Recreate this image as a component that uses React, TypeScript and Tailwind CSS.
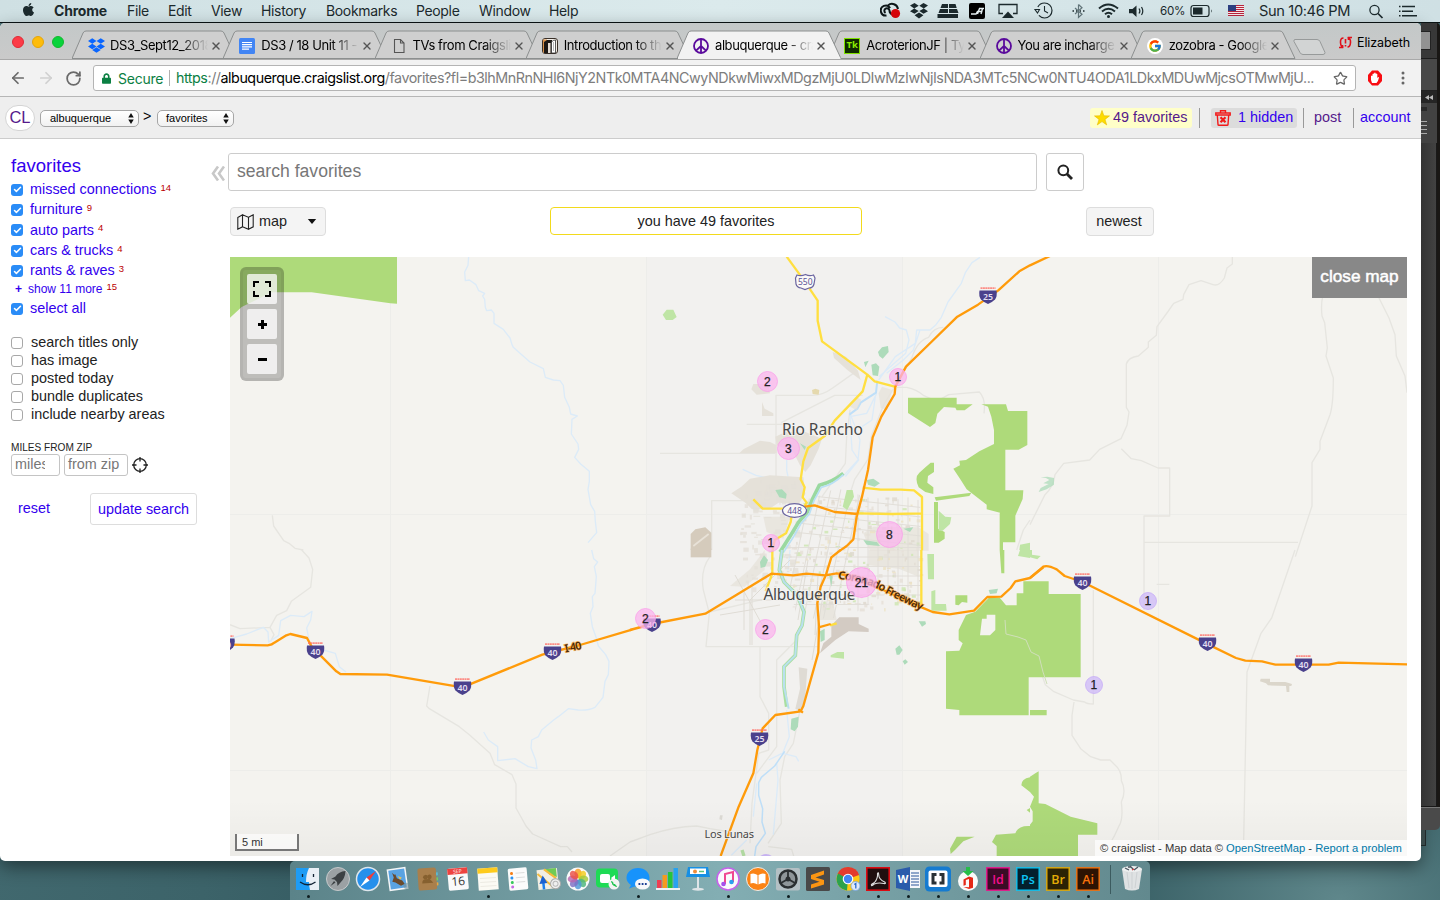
import React from "react";
import { FaApple, FaDropbox, FaLock } from "react-icons/fa";
import { FcGoogle } from "react-icons/fc";
import { X, ArrowLeft, ArrowRight, RotateCw, Star, Search, Check } from "lucide-react";

const ARIAL = "font-['Liberation_Sans',Arial,sans-serif]";
const UI = "font-['Inter',sans-serif]";

/* ---------- menu bar ---------- */

const menus: [string, string][] = [
  ["Chrome", "w-[73px] font-bold tracking-[-0.2px]"],
  ["File", "w-[41px]"],
  ["Edit", "w-[43px]"],
  ["View", "w-[50px]"],
  ["History", "w-[65px]"],
  ["Bookmarks", "w-[90px]"],
  ["People", "w-[63px]"],
  ["Window", "w-[70px]"],
  ["Help", "w-[40px]"],
];

function MenuBar() {
  return (
    <header className="flex h-[23px] shrink-0 items-center border-b border-[#0b1415] bg-linear-to-r from-[#cfe0e3] via-[#dbeaec] to-[#cfe0e4] pb-px pl-[21px] text-[14px] tracking-[-0.35px] text-[#1c2a2d]">
      <FaApple className="mr-[18px] -mt-0.5 size-[15px]" />
      {menus.map(([m, c]) => (
        <span key={m} className={c}>{m}</span>
      ))}
      <svg className="ml-[291px] h-[22px] w-[545px]" viewBox="880 0 545 22" fill="none" stroke="#1c2a2d">
        <path d="M886.500 15.500a5 5 0 1 1 3.600-7.500M885.500 13a2.600 2.600 0 1 1 4-2.500q0 3 3 4M888 5.500a6 6 0 0 1 10 3.500" strokeWidth="2" stroke="#0d1719" />
        <circle cx="895.500" cy="13.500" r="4.600" fill="#d9060b" stroke="none" />
        <path d="M910 5.500l4.500-2.500 4.200 2.800-4.500 2.700zM928 5.500l-4.500-2.500-4.200 2.800 4.500 2.700zM910 11.200l4.500 2.600 4.200-2.700-4.500-2.600zM928 11.200l-4.500 2.600-4.200-2.700 4.500-2.600zM914.600 15.200l4.400-2.800 4.400 2.800-4.400 3.300z" fill="#1c2a2d" stroke="none" />
        <path d="M942 4h6v4h-7.500zM949 4h6.500l1.200 4H949zM940 9h8v4h-9.500zM949 9h8l1.500 4H949zM937.500 14h20.500v4h-20.500z" fill="#1c2a2d" stroke="none" />
        <rect x="969" y="3" width="16" height="16" rx="2" fill="#000" stroke="none" />
        <path d="M971 14h5l1.500-2.500h5M979 8.500h5M977.500 14l2-5.500M981 14l1.500-5.500" stroke="#e8f2f4" strokeWidth="1.400" />
        <path d="M1003 13.500h-4v-9h18v9h-4" strokeWidth="1.300" />
        <path d="M1008 11.500l6 6.500h-12z" fill="#1c2a2d" stroke="none" />
        <path d="M1078.500 4.500v13l3.500-3.200-7-6.300M1078.500 4.500l3.500 3.200-7 6.300" stroke="#62757a" strokeWidth="1.200" />
        <path d="M1072.500 11h1.500M1083 11h1.500M1076 11h1M1080 11h1" strokeWidth="1.600" />
        <path d="M1099 8.500q9-8 19 0M1102 11.500q6.500-5.500 13 0M1105 14.300q3.500-3 7 0" strokeWidth="2" />
        <circle cx="1108.500" cy="16.500" r="1.500" fill="#1c2a2d" stroke="none" />
        <path d="M1129 9h3.500l4-3.500v11.500l-4-3.700h-3.500z" fill="#1c2a2d" stroke="none" />
        <path d="M1139 8.500q1.800 2.500 0 5M1141.500 7q2.600 4.200 0 8" strokeWidth="1.200" />
        <rect x="1191" y="5.500" width="18" height="11" rx="2.500" strokeWidth="1.200" />
        <rect x="1193" y="7.500" width="9.500" height="7" fill="#1c2a2d" stroke="none" />
        <path d="M1211.300 9.200q1.500 1.800 0 3.600z" fill="#1c2a2d" stroke="none" />
        <rect x="1228" y="5" width="16" height="11" fill="#f4e8ea" stroke="none" />
        <path d="M1228 5.500h16M1228 7.500h16M1228 9.500h16M1228 11.500h16M1228 13.500h16M1228 15.500h16" stroke="#b8243c" strokeWidth="1" />
        <rect x="1228" y="5" width="8" height="6" fill="#2c3f80" stroke="none" />
        <circle cx="1374.500" cy="10" r="4.600" strokeWidth="1.300" />
        <path d="M1378 13.500l4.500 4.500" strokeWidth="1.700" />
        <path d="M1399 6.500h1.500M1399 11.200h1.500M1399 15.800h1.500" strokeWidth="1.600" />
        <path d="M1402 6.500h13M1402 11.200h11M1402 15.800h15" strokeWidth="1.600" />
        <circle cx="1044.500" cy="10.500" r="7.500" strokeWidth="1.200" strokeDasharray="38 9" strokeDashoffset="-27" />
        <path d="M1035 9.500h4.500l-2 3.500zM1044.500 6v5l3.500 2" strokeWidth="1.100" />
        <text x="1160" y="15.300" fontSize="12.200" fill="#1c2a2d" stroke="none" textLength="25" lengthAdjust="spacingAndGlyphs">60%</text>
        <text x="1259" y="16" fontSize="14" fill="#1c2a2d" stroke="none" textLength="91" lengthAdjust="spacingAndGlyphs">Sun 10:46 PM</text>
      </svg>
    </header>
  );
}

/* ---------- tab strip ---------- */

const Peace = ({ className = "size-4" }: { className?: string }) => (
  <svg viewBox="0 0 16 16" className={className} fill="none" stroke="#5a0a9c" strokeWidth="1.800">
    <circle cx="8" cy="8" r="7" />
    <path d="M8 1v14M8 8l-5 4.700M8 8l5 4.700" />
  </svg>
);

const DocIcon = () => (
  <svg viewBox="0 0 16 16" className="size-4">
    <rect width="16" height="16" rx="1.500" fill="#4285f4" />
    <path d="M3 4.500h10M3 6.700h10M3 8.900h10M3 11.100h7" stroke="#fff" strokeWidth="1.200" />
  </svg>
);
const PageIcon = () => (
  <svg viewBox="0 0 16 16" className="size-4" fill="none" stroke="#555" strokeWidth="1.100">
    <path d="M3.500 1.500h6l3.500 3.500v9.500h-9.500zM9.500 1.500v3.500h3.500" />
  </svg>
);
const BookIcon = () => (
  <svg viewBox="0 0 16 16" className="size-4">
    <rect x=".5" y=".5" width="15" height="15" rx="2.500" fill="#f4efe9" stroke="#3a3029" />
    <path d="M1 1.500h4v13H1z" fill="#d9924a" />
    <path d="M2 15V4l3-2h5v13z" fill="#1c1815" />
    <rect x="6" y="5" width="2.500" height="10" fill="#e5dcd2" />
    <path d="M9.500 4q1.500-2 4-2v13h-4z" fill="#fff" stroke="#333" strokeWidth=".8" />
    <path d="M11.500 4v9" stroke="#999" strokeWidth=".7" />
  </svg>
);
const TkIcon = () => (
  <span className="flex size-4 items-center justify-center border border-[#7fe000] bg-[#102a00] font-['Open_Sans'] text-[9.500px] font-bold text-[#8cf000]">Tk</span>
);

const tabs: { t: string; icon: React.ReactNode; active?: boolean }[] = [
  { t: "DS3_Sept12_2018", icon: <FaDropbox className="size-[17px] text-[#0a66ff]" /> },
  { t: "DS3 / 18 Unit 11 - G", icon: <DocIcon /> },
  { t: "TVs from Craigslist", icon: <PageIcon /> },
  { t: "Introduction to the", icon: <BookIcon /> },
  { t: "albuquerque - craigs", icon: <Peace />, active: true },
  { t: "AcroterionJF | Type", icon: <TkIcon /> },
  { t: "You are incharge o", icon: <Peace /> },
  { t: "zozobra - Google S", icon: <FcGoogle className="size-4 rounded-full bg-white p-px" /> },
];

function TabStrip() {
  return (
    <div className="flex h-[36px] items-end bg-linear-to-b from-[#c3c8c8] to-[#cacaca] pl-[12px]">
      <div className="flex h-[36px] w-[60px] shrink-0 items-center gap-2 pt-0.5">
        <i className="size-3 rounded-full border border-[#e02a35] bg-[#fc3b47]" />
        <i className="size-3 rounded-full border border-[#e5a50a] bg-[#fdbc0b]" />
        <i className="size-3 rounded-full border border-[#12b92e] bg-[#08d33b]" />
      </div>
      {tabs.map((tab, i) => (
        <div key={i} className={`relative flex h-[29px] w-[151.250px] shrink-0 items-center pt-0.5 pl-[16px] ${tab.active ? "z-10" : ""}`}>
          <svg className="absolute left-0 top-0 h-[29px] w-[165px]" viewBox="0 0 165 29">
            <path d="M0 28.500L11 3Q12 1 14 1H149Q151 1 152 3L164 28.500Z" fill={tab.active ? "#f2f2f2" : "#cfcfcf"} stroke="#8c8f8f" />
            {tab.active && <path d="M1 28.500H163.500" stroke="#f2f2f2" strokeWidth="2" />}
          </svg>
          <span className="relative flex w-[22px] shrink-0 items-center">{tab.icon}</span>
          <span className="relative w-[98px] shrink-0 overflow-hidden whitespace-nowrap text-[13px] tracking-[-0.42px] text-black [mask-image:linear-gradient(to_right,black_72%,transparent)]">{tab.t}</span>
          <X className="relative ml-[2px] size-3 shrink-0 text-[#555]" strokeWidth={2.800} />
        </div>
      ))}
      <svg className="h-[36px] w-[55px] shrink-0" viewBox="0 0 55 36">
        <path d="M13 16.500h22q2 0 3 2l5 11q0 2-2 2H21q-2 0-3-2l-6-11q-.5-2 1-2z" fill="#d2d4d4" stroke="#979a9a" />
      </svg>
      <div className="flex h-[36px] w-[82px] shrink-0 items-center pt-[5px] pl-0.5 text-[12.500px] tracking-[-0.1px] text-black">
        <svg className="mr-[5px] mb-0.5 h-[13px] w-[13px]" viewBox="0 0 13 13" fill="none" stroke="#e0101a" strokeWidth="1.600">
          <path d="M4.500 2Q1.200 2 1.500 6.500T4.500 11M0 11.500h3.500V9M8.500 2q3.300 0 3 4.500T8.500 11M13 1.500H9.500V4M6.500 3v4.500M6.500 9v1.500" />
        </svg>
        <span>Elizabeth</span>
      </div>
    </div>
  );
}

function Toolbar() {
  return (
    <div className="flex h-[38px] items-center border-t border-b border-t-[#a9a9a9] border-b-[#b6b6b6] bg-[#f2f2f2] pl-[9px] text-[#6a6a6a]">
      <ArrowLeft className="size-[18px]" strokeWidth={2.300} />
      <ArrowRight className="ml-[10px] size-[18px] text-[#d0d0d0]" strokeWidth={2.300} />
      <RotateCw className="ml-[10px] size-[17px]" strokeWidth={2.500} />
      <div className="ml-[11px] flex h-[26px] w-[1263px] items-center rounded-[3px] border border-[#b4b4b4] bg-white pl-[8px] text-[14.300px] whitespace-nowrap">
        <FaLock className="h-[11px] w-[9px] text-[#0b8043]" />
        <span className="ml-[7px] w-[45px] text-[14px] tracking-[-0.25px] text-[#0b8043]">Secure</span>
        <span className="ml-[6px] h-4 w-px bg-[#b0b0b0]" />
        <span className="ml-[6px] w-[1157px] shrink-0 tracking-[-0.460px] text-[#7d7d7d]">
          <span className="text-[#0b8043]">https</span>://<span className="text-black">albuquerque.craigslist.org</span>/favorites?fl=b3lhMnRnNHI6NjY2NTk0MTA4NCwyNDkwMiwxMDgzMjU0LDIwMzIwNjIsNDA3MTc5NCw0NTU4ODA1LDkxMDUwMjcsOTMwMjU...
        </span>
        <Star className="size-[15px] shrink-0 text-[#666]" />
      </div>
      <svg className="ml-[11px] h-4 w-4" viewBox="0 0 16 16">
        <path d="M5 .5h6l4 4.500v6l-4 4.500H5L1 11V5z" fill="#f80c12" />
        <path d="M5 13Q3.500 10 4 6q1-1 1.500 0V4q1-1 1.600 0V3q1-1 1.600 0v1q1-1 1.600 0v4l1-1q1 0 .5 1.200Q11 12 9.500 13z" fill="#fff" />
      </svg>
      <svg className="ml-[12px] h-4 w-4" viewBox="0 0 16 16" fill="#666">
        <circle cx="8" cy="3" r="1.500" /><circle cx="8" cy="8" r="1.500" /><circle cx="8" cy="13" r="1.500" />
      </svg>
    </div>
  );
}

/* ---------- craigslist page ---------- */

const Spin = () => (
  <svg viewBox="0 0 6 12" className="h-[11px] w-[6px]"><path d="M3 0l3 5H0zM3 12l3-5H0z" fill="#111" /></svg>
);

function SiteHeader() {
  return (
    <div className="flex h-[42px] items-center border-b border-[#ccc] bg-[#eee] pl-[5px] text-[14.400px]">
      <span className="mr-[5px] flex h-[26px] w-[30px] items-center justify-center rounded-full border border-[#d4d4d4] bg-white text-[16.500px] text-[#551a8b]">CL</span>
      <span className="mt-px flex h-[17px] w-[99px] items-center justify-between rounded-[5px] border border-[#a6a6a6] bg-linear-to-b from-white to-[#f1f1f1] pr-[4px] pl-[9px] text-[11px] text-black">albuquerque<Spin /></span>
      <span className="w-[18px] pb-0.5 pl-[4px] text-black">&gt;</span>
      <span className="mt-px flex h-[17px] w-[77px] items-center justify-between rounded-[5px] border border-[#a6a6a6] bg-linear-to-b from-white to-[#f1f1f1] pr-[4px] pl-[8px] text-[11px] text-black">favorites<Spin /></span>
      <span className="ml-[856px] flex h-5 w-[102px] items-center rounded-[3px] bg-[#ffffc8] pl-[4px] whitespace-nowrap text-[#551a8b]">
        <svg viewBox="0 0 16 16" className="mr-[3px] size-4"><path d="M8 .5l1.900 5.300 5.600.1-4.500 3.500 1.700 5.500L8 11.600l-4.700 3.300L5 9.400.5 5.900l5.600-.1z" fill="#fddc00" stroke="#e8b800" strokeWidth=".6" /></svg>
        49 favorites
      </span>
      <span className="ml-[7px] h-5 w-px bg-[#999]" />
      <span className="ml-[11px] flex h-5 w-[86px] items-center rounded-[3px] bg-[#dcdcdc] pl-[4px] whitespace-nowrap text-[#3300ee]">
        <svg viewBox="0 0 16 16" className="mr-[7px] size-4" fill="none" stroke="#f21a1a" strokeWidth="1.400">
          <path d="M5.500 2.500v-1.800h5v1.800M.8 3h14.400v2H.8zM2.300 5l.7 9.500q0 .8 1 .8h8q1 0 1-.8L13.700 5" /><path d="M5.500 7.300l5 5M10.500 7.300l-5 5" strokeWidth="2.200" />
        </svg>
        1 hidden
      </span>
      <span className="ml-[6px] h-5 w-px bg-[#999]" />
      <span className="ml-[10px] w-[39px] text-[#551a8b]">post</span>
      <span className="h-5 w-px bg-[#999]" />
      <span className="ml-[6px] text-[#3300ee]">account</span>
    </div>
  );
}

const cats: [string, number][] = [
  ["missed connections", 14], ["furniture", 9], ["auto parts", 4], ["cars & trucks", 4], ["rants & raves", 3],
];
const opts = ["search titles only", "has image", "posted today", "bundle duplicates", "include nearby areas"];

const Checked = () => (
  <span className="mr-[7px] flex size-3 items-center justify-center rounded-[3px] bg-[#2a8cf7]">
    <Check className="size-[9px] text-white" strokeWidth={4} />
  </span>
);

function Sidebar() {
  return (
    <aside className="w-[211px] shrink-0 pt-[14px] pl-[11px] text-[14.400px] text-[#3300ee]">
      <div className="flex h-[26px] items-center text-[18.500px]">favorites</div>
      {cats.map(([c, n]) => (
        <div key={c} className="flex h-[20.300px] items-center pt-[1.500px]">
          <Checked />
          <span>{c}</span>
          <span className="ml-[4px] pb-[4px] text-[9.500px] text-[#b00]">{n}</span>
        </div>
      ))}
      <div className="flex h-[17px] items-center pl-[4px] text-[12px]">
        <b className="mr-[6px] text-[12px]">+</b>show 11 more<span className="ml-[4px] pb-[4px] text-[9.500px] text-[#b00]">15</span>
      </div>
      <div className="flex h-[21px] items-center pt-[1.500px]"><Checked />select all</div>
      <div className="mt-[14.500px] text-[#222]">
        {opts.map((o) => (
          <div key={o} className="flex h-[18px] items-center pt-[1.500px]">
            <span className="mr-[8px] size-3 rounded-[3px] border border-[#a8a8a8] bg-white" />
            {o}
          </div>
        ))}
      </div>
      <div className="mt-[17px] flex h-[14px] items-center text-[10.100px] text-[#222]"><span className="mt-0.5">MILES FROM ZIP</span></div>
      <div className="flex h-[22px] items-center text-[14.400px] text-[#777]">
        <span className="mr-[4px] flex h-[22px] w-[49px] items-center rounded-[3px] border border-[#c4c4c4] pl-[3px]"><span className="w-[30px] overflow-hidden">miles</span></span>
        <span className="mr-[4px] flex h-[22px] w-[64px] items-center rounded-[3px] border border-[#c4c4c4] pl-[3px] whitespace-nowrap">from zip</span>
        <svg viewBox="0 0 16 16" className="size-4" fill="none" stroke="#222" strokeWidth="1.300"><circle cx="8" cy="8" r="6.300" /><path d="M8 0v4.500M8 11.500V16M0 8h4.500M11.500 8H16" /></svg>
      </div>
      <div className="mt-[17px] flex h-[32px]">
        <span className="w-[79px] pt-[5px] pl-[7px]">reset</span>
        <span className="flex w-[107px] items-center justify-center rounded-[3px] border border-[#ddd] bg-white pt-0.5">update search</span>
      </div>
    </aside>
  );
}

/* ---------- map ---------- */

const Tile = ({ x, y, children }: { x: number; y: number; children: React.ReactNode }) => (
  <g transform={`translate(${x} ${y}) scale(.333333)`}>{children}</g>
);

function Shield({ x, y, n }: { x: number; y: number; n: string }) {
  return (
    <g transform={`translate(${x} ${y})`}>
      <path d="M-7.500-7.800h15" stroke="#ff6b63" strokeWidth="1.800" strokeDasharray="2 .4" opacity=".75" />
      <path d="M-8.500-5.500H8.500Q9.500 0 7 3.500 4 6.500 0 8-4 6.500-7 3.500-9.500 0-8.500-5.500Z" fill="#4a418c" />
      <text y="3.600" textAnchor="middle" fontFamily="Noto Sans" fontWeight="600" fontSize="8.800" fill="#e3dff0">{n}</text>
    </g>
  );
}

function Pin({ x, y, r, n, v }: { x: number; y: number; r: number; n: string; v?: boolean }) {
  return (
    <g>
      <circle cx={x} cy={y} r={r - 0.5} fill={v ? "#cdb8f8" : "#fbb4ee"} fillOpacity=".75" stroke={v ? "#c5abf7" : "#fa9eea"} strokeOpacity=".75" />
      <text x={x - 0.1} y={y + 4} textAnchor="middle" fontFamily="Liberation Sans" fontSize="12" fill="#222" stroke="#222" strokeWidth=".25">{n}</text>
    </g>
  );
}

/* short street segments and small blocks spread over the built-up area */
function seeded(seed: number) {
  let s = seed;
  return () => {
    s = (s * 16807) % 2147483647;
    return s / 2147483647;
  };
}
const rnd = seeded(77);
const blocks = Array.from({ length: 260 }, () => {
  const x = 792 + rnd() * 128;
  return { x, y: 497 + rnd() * 112, w: 1 + rnd() * 4, h: 1 + rnd() * 3, c: ["#e6e0d8", "#e6e0d8", "#dfd9cf", "#cfe6b4", "#ece2c4"][Math.floor(rnd() * 5)] };
});
const westBlocks = Array.from({ length: 110 }, () => ({ x: 740 + rnd() * 56, y: 480 + rnd() * 108, w: 1 + rnd() * 6, h: 1 + rnd() * 4 }));

function MapDrawing() {
  return (
    <svg className="absolute inset-0 h-[599px] w-[1177px]" viewBox="230 257 1177 599">
      <defs>
        <linearGradient id="fade" x1="0" y1="0" x2="0" y2="1"><stop offset="0" stopColor="#000" stopOpacity="0" /><stop offset="1" stopColor="#000" stopOpacity=".035" /></linearGradient>
        <clipPath id="city"><path d="M806 502l30-14 34 10 50 2 2 105-34-12-20 12-20 12-50 4-10-40-16-20 20-30z" /></clipPath>
      </defs>
      <rect x="230" y="257" width="1177" height="599" fill="#f4f3ef" />
      <rect x="646" y="257" width="257" height="599" fill="#f2f1ef" />
      <path d="M390.500 257v599M646.500 257v599M902.500 257v599M1158.500 257v599M230 514.500h1177M230 770.500h1177" stroke="#ededea" fill="none" />

      {/* faint county roads */}
      <g fill="none" stroke="#e6e5e0" strokeWidth="4" strokeLinejoin="round">
        <Tile x={230} y={250}><path d="M127 796l4 32 30 44 16 8 18 15 25 5" /></Tile>
        <Tile x={230} y={550}><path d="M215 0l22 24 11 34-6 54-58 42-14 28-30 14-20 36-90 4-30-12M120 232l12 22-10 20M600 408l-10 60 8 8 90 54 30 24 62 56 14 34 52 30 12 28v72l30 54 20 24 84 38 20 0 14 16M1200 876l-60 42" /></Tile>
        <Tile x={630} y={250}><path d="M438 680V436h110q30 0 60-22l62-44M350 523h122M90 610h345M454 518l160-82h84M800 412h30q30 6 50 24l40 18 36-20 92-8q20 20 14 64M940 232q-30 0-44 30-34 10-50 60l-34 60-50 80-38 96-10 70-40 60-26 80M660 480l-10 80-4 80-70 100M245 900V752h120M1160 900l20-60 20-30" /></Tile>
        <Tile x={630} y={550}><path d="M240 20q-30 40-20 100l18 70-10 100h340M238 186l170-40M390 290v150l26 50v110l-30 10-20 150-6 120M500 270l-60 60v260l-60 80M510 480l-20 100-26 40-14 70 4 130-40 60M0 876l60-22q70-24 140-26l40 8 60 10M415 890l70 8 6 20" /></Tile>
        <Tile x={1030} y={250}>
          <path d="M607 20v22l-16 12-8 30q-16 26-34 20l-36-12-36 12-16 30-2 14-28 12-18 26-32 44-2 26-24 20v16l-30 26q-30 4-36 24v130l8 14-6 40-18 40-64 32-30 32-78 10-26 34q-4 36-30 60L0 824M274 596l30 30 30 6 50 22h35v144h-77v102M342 877h462M970 28l-80 90q-20 20-14 80l8 20 8 76-4 24 22 66q0 80-10 110l-30 80v24l-24 40v130l-50 152M985 24l32 60 60 120 18 50 4 64 26 60 6 50" />
        </Tile>
        <Tile x={1030} y={550}><path d="M342 0v180M380 103h38M795 0l-70 204-32 46-42 116-10 504M190 120v342q-20 0-26-6l-34-6-60-26-24-20-14-40M132 456l-6 40v60l26 40 30 24 30 10h28l12 12q24 20 22 50 16 30 0 64 6 50-6 70l-14 30-8 14" /></Tile>
      </g>

      {/* rivers */}
      <g fill="none" stroke="#dcebf8" strokeWidth="4" strokeLinejoin="round">
        <Tile x={230} y={250}><path d="M716 20l-2 26-10 20 2 26 12-2 20 14 8 18 18 8-6 8 6 10 2 24 4 10 14-2 8 10v30l28 18 20 26 6 20 4 8 20 18 30 26 40 20 6 26 24 8 20 2 10 14 4 36 14 30 4 20 20 6-16 10-2 44 20 30 2 16-12 24 18 20 26 22v30l-4 24 8 46 12 20 2 30 4 34-26 30" /></Tile>
        <Tile x={230} y={550}><path d="M1085 0l6 26 12 10-10 14 6 30-4 50-8 10 2 30-8 20 6 40 12 34 6 24 22 26 10 20-2 40-10 20-6 48-24 30q-20 10-50 8l-30-4-30 24-14 10-36 30-10 20-20 10-2 24 14 36 4 26-26-6-40-24-52 6V590l-28-20-14-24M0 266l50-14 50-20 14 14 2 30 30-20 6-44 30-16 40 4 24-16-4 26-12 24 10 50 20 18M280 300l36 10 12 40 20 16" /></Tile>
        <Tile x={630} y={250}><path d="M1050 22l-24 16-20 30-12 32-40 56-20 46-16 22-18 16h-40l-4 40-60 40-50 70M765 200l30 16 14 18 20 6 8 30-10 40-80 70M870 240l-20 60-30 30-50 40M338 658l40 18 66 16 70 40M470 630v30l4 20M740 430l-30 60-50 10 6 100 20 30-40 50M660 490l30 80-6 60-46 50M736 440l-10 70-30 20" /></Tile>
        <Tile x={630} y={550}><path d="M470 480l8 80-20 50 40 10 8 14M440 640l4 50-14 164M380 700l-10 100M350 870l-46 46M456 610l-40 20M480 0l-6 60" /></Tile>
      </g>
      <g fill="none" stroke="#bfdff8" strokeWidth="4.500" strokeLinejoin="round">
        <Tile x={630} y={250}><path d="M742 392l-4 36-46 30-10 18-24 18" strokeWidth="6" /></Tile>
        <Tile x={630} y={550}><path d="M464 604l-30 44-40 34-8 16v38l12 40-2 40 10 34-28 40-4 28" /></Tile>
      </g>

      {/* built-up areas */}
      <g fill="#e5e1d9">
        <Tile x={630} y={250}>
          <path d="M608 306l40 14 36 42 8 28-40-30-40-36zM370 402h44l6 28-40 4-16-16zM396 456l8 20 26 14v8h-34zM340 598l50-26 30 4 20 10 0 24-112 0zM436 560l30-14 60 0 50 20-10 30-24 50-16 20-16-20-20-40-50-20zM304 730l30-20 26-24 60-10 100 6 6 50-20 30-60-4-30 20-50 0-20-20z" />
          <path d="M660 470l20-30 14 10-14 30zM746 430l10-20 30 10-14 60-20-6zM400 800l80 0-20 66-50-20z" opacity=".7" />
          <path d="M700 850l30-20 136 2 30 20v50H720z" opacity=".7" />
        </Tile>
        <Tile x={630} y={550}><path d="M716 0h150v80l-60-24-90-10zM300 108l60-50 44-58 0 60-60 50zM570 160l40 0 10 50-50 0z" opacity=".7" /></Tile>
      </g>
      {westBlocks.map((b, i) => <rect key={i} x={b.x} y={b.y} width={b.w} height={b.h} fill="#e4e0d8" opacity=".8" />)}
      {blocks.map((b, i) => <rect key={i} x={b.x} y={b.y} width={b.w} height={b.h} fill={b.c} opacity=".85" />)}
      <g clipPath="url(#city)" stroke="#e0ddd7" strokeWidth=".9" fill="none">
        {Array.from({ length: 13 }, (_, i) => <path key={i} d={`M${798 + i * 10} 480v140`} transform={i < 6 ? `rotate(12 ${798 + i * 10} 550)` : undefined} />)}
        {Array.from({ length: 12 }, (_, i) => <path key={i} d={`M780 ${500 + i * 9.500}h150`} transform={i < 5 ? `rotate(6 850 ${500 + i * 9.500})` : undefined} />)}
      </g>
      <g fill="none" stroke="#dfdcd5" strokeWidth="1">
        <path d="M735 575l30 55M744 590v40M752 585v60M720 615l60-10M790 560l-40 40v45M808 560l-10 60M818 575l-3 60M735 600h60M812 660l12-70" />
      </g>
      <Tile x={630} y={250}>
        <path d="M182 900V852l14-14 30-6 18 16v52z" fill="#d5cbbc" /><path d="M190 888l46-36" stroke="#e8e2d8" strokeWidth="5" />
        <path d="M546 420l10-4 12 4-2 14-18-2z" fill="#e5d9ae" />
      </Tile>
      <Tile x={630} y={550}>
        <path d="M182-4H244V22H182z" fill="#d5cbbc" />
        <path d="M604 226l24-24h58v20l30 14v10l-60-2-40 26-46 40 10-30 24-20z" fill="#d3cbc3" />
        <path d="M506 352l26 4-6 80-10 50-20-10 14-60z" fill="#dfdbd4" />
        <path d="M270 796h8l-2 14-8-2z" fill="#dcdad4" />
      </Tile>
      <Tile x={1030} y={550}><path d="M692 386h28v10h46l20 6-2 6h-6v18h-8l-2-18-54-2-6-6-18-6z" fill="#dbd6cb" /></Tile>

      {/* parks and forest */}
      <g fill="#aeda7a">
        <Tile x={230} y={250}><path d="M0 20h501v141l-20-1-236-33-120 0-90 44L0 203z" /></Tile>
        <Tile x={630} y={250}>
          <path d="M834 443h146v20h48l-24 18h-24l-4-8-34-2-20 20-6 28-16 12-66-42z" />
          <path d="M1054 463h74l6 20h58v102l-26 14h-40v122h54l-2 26-22 50v80h-46V788l-40-10v-14l-60-46-20-32-20-30 20-10-2-14 20-2 40-26 44-22V540l-8-40-10-30z" />
          <path d="M888 650l14-12h10v28l-18 12-2 20 18 14v20l-24-6-20-14q-14-30 2-44zM914 742l110-14-6 10-100 14zM912 756h12v80l20 10v20l-18 12h-14zM1109 790v110h10v-110z" />
        </Tile>
        <Tile x={630} y={550}>
          <path d="M948 304L988 302L998 280L986 270V240L1008 195L1036 185L1076 144H1110L1128 166H1160V130H1180V94H1256V132H1352V382H1196V496H988V480L948 476Z" />
          <path d="M1050 256l6-50h14v-12h26v46l-16 16z" fill="#f4f3ef" />
          <path d="M976 136h36v22l-16-2-10 10-10-2zM1109 0h14v70h-9z" />
          <path d="M960 896L980 860H1034L1000 874L975 900L962 912Z" />
          <path d="M1100 918V888L1086 876L1098 854L1156 850Q1164 826 1200 828V918zM1174 706q0-20 26-24v44zM1190 780l10-6v14z" />
        </Tile>
        <Tile x={1030} y={550}>
          <path d="M0 480h50v16H0zM0 680l16-10 10-6v96l20 2 76 38 80 20v34h-58v64H0v-94l8-10v-30l-8-14 12-30-12-14z" />
        </Tile>
      </g>
      <path d="M1005 620l1 14 12 3 8 3 5 12 8 4 4 16 4 12" fill="none" stroke="#d0dfba" />
      <g fill="#bfe5a5">
        <Tile x={630} y={250}><path d="M98 194l12-15h20l10 22-12 9h-20zM926 782l20 18 18 2-4 20-22 20h-12zM650 720h18l4 20-20 40-14-10zM1170 884l30-6v22h-32z" /></Tile>
        <Tile x={630} y={550}><path d="M602 316l20-10h20v20l-40-4zM892 12h20v76h-18zM904 124l12-4v42h32l2 20h-46zM1170 0h30v24l-36-6z" /></Tile>
        <Tile x={1030} y={550}><path d="M0 0h6v14l26 4-10 10-22-6z" /></Tile>
      </g>
      <g fill="#addbba">
        <Tile x={630} y={250}><path d="M744 306l12-14 18-4 2 18-18 20-10-8zM724 344l14-4 10 10-4 28-16-2zM702 336l14-4-10 20zM710 690l20-4 20 14-16 10-20-6zM436 720l20-2 14 14-2 14-20-4zM700 870l40 6 10 12-40-4zM820 836l30-4-10 14zM510 580l18 10-4 10z" /></Tile>
        <Tile x={630} y={550}><path d="M796 296l12-10 10 14-10 14h-8zM818 334l8-6 8 8-10 8zM484 506l22-6-2 30-10 14-12-6zM390 36l12-20 12 14-8 20-14 4zM570 244l14-8v34l-12 6zM866 214h20l2 8-12 8zM596 70l12 10-4 30zM1076 120l28-4-4 14-20 2z" /></Tile>
        <Tile x={1030} y={250}><path d="M32 682l20-2 20 4 0 20-22 14-24 8 6-12 24-12-16-2 18-10-10-6z" fillOpacity=".75" /></Tile>
      </g>

      {/* riverside green belt */}
      <Tile x={630} y={250}>
        <path d="M640 670q-30 24-72 36l-20 40-16 40-26 30-24 40-32 50" fill="none" stroke="#9ad9a0" strokeWidth="11" />
        <path d="M640 674q-30 30-66 38l-22 40-14 40-26 30-20 36-32 50" fill="none" stroke="#b9e0f5" strokeWidth="5" />
      </Tile>
      <Tile x={630} y={550}>
        <path d="M456 0l-8 60 14 36 40 40 20 50-6 40-16 30-4 60-34 34v60l8 60" fill="none" stroke="#a9dfa0" strokeWidth="11" />
        <path d="M456 0l-8 60 14 36 40 40 20 50-6 40-16 30-4 60-34 34v60l14 66" fill="none" stroke="#b9e0ee" strokeWidth="6" />
        <path d="M336 900l6 18" stroke="#b5dfa5" strokeWidth="10" />
      </Tile>

      {/* state and US highways */}
      <g fill="none" stroke="#ffdf40" strokeWidth="7" strokeLinejoin="round">
        <Tile x={630} y={250}>
          <path d="M470 20l54 74 39 58v60l13 62 136 100 22 20 60 16M712 374l-14 50-84 88-30 46-50 36-14 40-8 54 12 24-6 30 12 16-10 16M370 748l28 28h90l-6 40-14 34-34 20-6 30M698 713l54 6 60 0 40 2 24 20v160M684 790l100 2 94-2" />
        </Tile>
        <Tile x={630} y={550}><path d="M874 0v168M427 0v70l-20 54M600 226l20-6" strokeWidth="7" /></Tile>
      </g>
      {/* interstates */}
      <g fill="none" stroke="#ff9b0a" strokeWidth="7" strokeLinejoin="round">
        <Tile x={630} y={250}>
          <path d="M1260 18L1200 46L1168 64L1104 122L1044 164L982 200L904 276L828 350L796 410L794 432L754 500L728 562L714 660L696 740L680 800L670 868L650 888L630 902M524 770l30-4 60 20 70 6" />
        </Tile>
        <Tile x={230} y={550}><path d="M0 284l113 2q14-2 20-8l36-22 12-4 50 12 14 26 74 74 12 8 140 2 226 38 240-98L1050 285L1206 239" /></Tile>
        <Tile x={630} y={550}>
          <path d="M0 240L66 222L226 191L330 128L424 71L490 76L530 71L586 76L620 70L660 78L760 120L875 172L908 186L958 193L1032 182L1072 141L1114 140L1142 114L1156 94L1200 84L1240 52M632 0L604 22L588 74L572 110L562 160L567 230L565 308L520 468L512 484L436 495L398 535L382 600L370 670L326 770L272 918M566 232l36-10M505 478l14 10" />
        </Tile>
        <Tile x={1030} y={550}><path d="M0 84l40-34q12-6 40 8l24 20 54 18 370 184 90 44 28 8 50 2 40 10h160l30-6 210 5" /></Tile>
      </g>

      <Shield x={988} y={296} n="25" /><Shield x={315.500} y={651} n="40" /><Shield x={462.500} y={687} n="40" />
      <Shield x={552.500} y={652} n="40" /><Shield x={652} y={624} n="40" /><Shield x={759.500} y={738} n="25" />
      <Shield x={1082.500} y={582} n="40" /><Shield x={1207.500} y={643} n="40" /><Shield x={1303.500} y={664} n="40" /><Shield x={226} y={644} n="40" />
      <g fontFamily="Noto Sans" fill="#5a5296" textAnchor="middle">
        <path d="M797 275q4 1.500 8.500-.5 4 2 8 .5l1.500 3-1 6q-1 4-5 4l-4 1.500-4-1.500q-4-.5-5-4l-.5-6z" fill="#fbfaf8" stroke="#6b65a0" strokeWidth="1.200" />
        <text x="805.300" y="285" fontSize="8.500">550</text>
        <ellipse cx="794.500" cy="510.500" rx="12" ry="6.800" fill="#fbfaf8" stroke="#6b65a0" strokeWidth="1.200" />
        <text x="794.500" y="513.700" fontSize="8.500">448</text>
      </g>
      <g fontFamily="Noto Sans" stroke="#f5f4f2" strokeWidth="2" strokeOpacity=".75" paintOrder="stroke" fill="#484848">
        <text x="782" y="435" fontSize="15.500" textLength="81">Rio Rancho</text>
        <text x="763.500" y="600" fontSize="15.500" textLength="92">Albuquerque</text>
        <text x="704.500" y="838" fontSize="11" textLength="49.500">Los Lunas</text>
      </g>
      <g fontFamily="Noto Sans" fontWeight="600" fill="#4a2a0a" stroke="#ffa733" strokeWidth="1.500" strokeOpacity=".7" paintOrder="stroke" fontSize="11">
        <text transform="translate(565.500 652.500) rotate(-12)" textLength="17">I-40</text>
        <path id="fwy" d="M838 579Q864 581 884 592T930 614" fill="none" stroke="none" />
        <text textLength="90"><textPath href="#fwy">Coronado Freeway</textPath></text>
      </g>
      <Pin x={767.500} y={381.500} r={10.500} n="2" /><Pin x={898} y={377} r={9} n="1" /><Pin x={788.500} y={448.500} r={11.500} n="3" />
      <Pin x={889.500} y={534.500} r={13.500} n="8" /><Pin x={771} y={543} r={9} n="1" /><Pin x={861.500} y={582.500} r={15.500} n="21" />
      <Pin x={645.500} y={618.500} r={10.500} n="2" /><Pin x={765.500} y={629.500} r={10.500} n="2" />
      <Pin x={1148} y={601} r={9} n="1" v /><Pin x={1094} y={685} r={9} n="1" v />
      <circle cx="766" cy="863" r="9" fill="#cdb8f8" />
      <rect x="230" y="800" width="1177" height="56" fill="url(#fade)" />
    </svg>
  );
}

function MapPanel() {
  return (
    <div className="relative mt-[21px] ml-[19px] h-[599px] w-[1177px] overflow-hidden">
      <MapDrawing />
      <div className="absolute top-[10px] left-[10px] flex w-[44px] flex-col items-center gap-[5px] rounded-[6px] border-[3px] border-black/5 bg-black/22 py-[4px]">
        <span className="flex size-[30px] items-center justify-center rounded-[2px] bg-white/75">
          <svg viewBox="0 0 18 16" className="h-4 w-[18px]" fill="none" stroke="#000" strokeWidth="2"><path d="M1 6V1h5M12 1h5v5M17 10v5h-5M6 15H1v-5" /></svg>
        </span>
        <span className="flex size-[30px] items-center justify-center rounded-[2px] bg-white/75">
          <svg viewBox="0 0 9 9" className="size-[9px]" stroke="#000" strokeWidth="3"><path d="M0 4.500h9M4.500 0v9" /></svg>
        </span>
        <span className="flex size-[30px] items-center justify-center rounded-[2px] bg-white/75">
          <svg viewBox="0 0 9 9" className="size-[9px]" stroke="#000" strokeWidth="3"><path d="M0 4.500h9" /></svg>
        </span>
      </div>
      <div className="absolute top-0 right-0 flex h-[41px] w-[95px] items-center justify-center bg-[#888] pb-px text-[17.200px] whitespace-nowrap text-white [-webkit-text-stroke:0.5px_white]">close map</div>
      <div className="absolute top-[577px] left-[5px] h-[17px] w-[64px] border-2 border-t-0 border-[#777] bg-white/60 pl-[5px] text-[11px] leading-[17px] text-[#333]">5 mi</div>
      <div className="absolute right-0 bottom-0 h-[16px] w-[312px] bg-white/70 pl-[5px] text-[11.210px] leading-[17px] whitespace-nowrap text-[#333]">
        © craigslist - Map data © <span className="text-[#0078a8]">OpenStreetMap</span> - <span className="text-[#0078a8]">Report a problem</span>
      </div>
    </div>
  );
}

function Results() {
  return (
    <main className="w-[1210px] pt-[14px] text-[14.400px] text-[#222]">
      <div className="flex h-[38px] items-center">
        <svg viewBox="0 0 14 15" className="mt-[3px] mr-[3px] h-[15px] w-[14px]" fill="none" stroke="#c8c8c8" strokeWidth="2.600"><path d="M7 .5L2 7.500l5 7M13 .5L8 7.500l5 7" /></svg>
        <span className="flex h-[38px] w-[809px] items-center rounded-[3px] border border-[#ccc] pb-px pl-[8px] text-[17.600px] text-[#777]">search favorites</span>
        <span className="ml-[9px] flex h-[38px] w-[38px] items-center justify-center rounded-[3px] border border-[#ccc]">
          <svg viewBox="0 0 16 16" className="size-4" fill="none" stroke="#222"><circle cx="6.300" cy="6.300" r="4.900" strokeWidth="2" /><path d="M10 10l5 5" strokeWidth="2.800" /></svg>
        </span>
      </div>
      <div className="mt-4 flex h-[29px] items-start pl-[19px]">
        <span className="flex h-[29px] w-[96px] items-center rounded-[4px] border border-[#ddd] bg-[#f4f4f4] pl-[6px]">
          <svg viewBox="0 0 17 16" className="mr-[5px] h-4 w-[17px]" fill="none" stroke="#222" strokeWidth="1.100"><path d="M.8 3.500L5.500.8v12L.8 15.200zM5.500.8l6 2.500v12l-6-2.500M11.500 3.300l4.700-2.500v12l-4.700 2.500" /></svg>
          map
          <svg viewBox="0 0 10 6" className="ml-[20px] h-[5px] w-[10px]"><path d="M0 0h10L5 6z" fill="#111" /></svg>
        </span>
        <span className="ml-[224px] flex h-[28px] w-[312px] items-center justify-center rounded-[4px] border border-[#f2da1c] bg-white pt-px">you have 49 favorites</span>
        <span className="ml-[224px] flex h-[29px] w-[68px] items-center justify-center rounded-[4px] border border-[#ddd] bg-[#f4f4f4] pr-0.5">newest</span>
      </div>
      <MapPanel />
    </main>
  );
}

/* ---------- window behind ---------- */

function BackWindow() {
  return (
    <div className="flex h-[838px] w-[19px] flex-col">
      <div className="flex h-[784px] rounded-tr-[4px] border-r-[3px] border-[#191715] bg-[#3a3a3a]">
        <div className="flex w-4 flex-col">
          <div className="h-[36px] border-b border-[#1c1c1c] bg-[#383838] pt-[8px]"><div className="h-[19px] w-[10px] border border-l-0 border-[#222] bg-[#929292]" /></div>
          <div className="h-[32px] border-b border-[#222] bg-[#484848]" />
          <div className="flex h-[12px] items-center justify-center bg-[#252525]">
            <svg viewBox="0 0 8 5" className="h-[5px] w-[8px]" fill="#bbb"><path d="M4 0v5L0 2.500zM8 0v5L4 2.500z" /></svg>
          </div>
          <div className="h-[40px] bg-[#424242] pt-[4px]">
            <svg viewBox="0 0 7 30" className="h-[30px] w-[7px]"><path d="M1 0v4M3 0v4M5 0v4" stroke="#111" /><path d="M0 14.500h6M0 18.500h6M0 22.500h6M0 26.500h6" stroke="#aaa" /></svg>
          </div>
          <div className="h-[664px] border-r border-b border-[#191919] bg-linear-to-r from-[#343434] to-[#424242]" />
        </div>
      </div>
      <div className="h-[23px] rounded-br-[5px] border-t border-[#777] bg-[#4a4a4a]" />
      <div className="h-4 w-[5px] border-r border-b border-[#20292a] bg-[#39494a]" />
    </div>
  );
}

/* ---------- dock ---------- */

const Adobe = ({ t, c, b }: { t: string; c: string; b: string }) => (
  <g><rect x=".8" y=".8" width="22.400" height="22.400" fill={b} stroke={c} strokeWidth="1.600" strokeOpacity=".85" /><text x="12" y="16.500" textAnchor="middle" fontFamily="Open Sans" fontWeight="600" fontSize="12.500" fill={c}>{t}</text></g>
);

const dock: [boolean, React.ReactNode][] = [
  [true, <g><rect y="1" width="23" height="22" fill="#1d9cf5" /><path d="M13 1h10v22h-9q-1-4-1-8h-3q0-8 3-14z" fill="#e9eff5" /><path d="M6.500 7v3M17.500 7v3M4 15q8 5.500 15.500 0" stroke="#123" strokeWidth="1.300" fill="none" /></g>],
  [false, <g><circle cx="12" cy="12" r="11.500" fill="#9ba1a4" stroke="#c6cacc" /><path d="M19.500 4q-7 .5-10 5.500L5 12l3.500.5 2.500 2.500.5 4 3-3.500q4.500-4 5-11.500zM8 14l-3.500 5 5-3.500z" fill="#3c4144" /></g>],
  [false, <g><circle cx="12" cy="12" r="11.500" fill="#2590ec" stroke="#dfe7ec" strokeWidth="1.500" /><path d="M20 4l-6.500 9.500-3-3z" fill="#f23c38" /><path d="M4 20l6.500-9.500 3 3z" fill="#fff" /></g>],
  [false, <g transform="rotate(-8 12 12)"><rect x="2" y="1" width="19" height="22" fill="#f4f6f7" /><rect x="3.500" y="2.500" width="16" height="19" fill="#5aa3e2" /><path d="M7 5q2 3 3 2l1 4 5 3 2 4-4 1-5-4-3-1 2-4z" fill="#6b4b2d" /><path d="M12 9l4 2-2 2z" fill="#e8c25a" /><circle cx="19.500" cy="20" r="3.200" fill="#77929b" opacity=".6" /></g>],
  [false, <g transform="rotate(-4 12 12)"><rect x="2" y="1" width="18.500" height="22" rx="2" fill="#a97f4c" /><path d="M20.500 6H22v3h-1.500z" fill="#5bc2dd" /><path d="M20.500 11H22v3h-1.500z" fill="#7ccb5c" /><path d="M20.500 16H22v3h-1.500z" fill="#f0a63a" /><circle cx="9.500" cy="10" r="2.300" fill="#86602f" /><circle cx="13.500" cy="10" r="2.300" fill="#86602f" /><path d="M6 16q0-4 3.500-4t4 0 3.500 4z" fill="#86602f" /></g>],
  [false, <g transform="rotate(-5 12 12)"><rect x="2" y="1" width="20" height="22" rx="1.500" fill="#fafafa" /><path d="M2 1h20v6H2z" fill="#ee4340" /><text x="12" y="6" fontSize="5" fill="#fff" textAnchor="middle">SEP</text><text x="12" y="18.500" fontSize="12" textAnchor="middle" fill="#333">16</text></g>],
  [true, <g transform="rotate(-4 12 12)"><rect x="2" y="1" width="20" height="22" fill="#fbfaf4" /><path d="M2 1h20v5H2z" fill="#fecb1d" /><path d="M4 11h16M4 15h16M4 19h16" stroke="#eceae2" /></g>],
  [false, <g transform="rotate(-5 12 12)"><rect x="2.500" y="1" width="19" height="22" rx="1.500" fill="#fbfbfb" /><circle cx="6" cy="6" r="1.500" fill="#f77f16" /><circle cx="6" cy="10.500" r="1.500" fill="#2a94f3" /><circle cx="6" cy="15" r="1.500" fill="#37c759" /><circle cx="6" cy="19.500" r="1.500" fill="#c66be2" /><path d="M10 6h9M10 10.500h9M10 15h9" stroke="#ddd" /></g>],
  [false, <g transform="rotate(-6 12 12)"><rect x="1.500" y="2" width="20.500" height="20" fill="#f2eee2" /><path d="M10 2h11v9l-7-3z" fill="#70cb55" /><path d="M2 6l16 16M9 2l11 10" stroke="#f5bb3c" strokeWidth="2" /><path d="M7 10v12" stroke="#1b80ee" strokeWidth="2.500" /><path d="M7 8l4 8H3z" fill="#1b60d0" /><circle cx="19" cy="17.500" r="5" fill="#f0f0f0" stroke="#aaa" /><circle cx="19" cy="17.500" r="2.500" fill="none" stroke="#bbb" /></g>],
  [false, <g><circle cx="12" cy="12" r="11.500" fill="#fafafa" />{["#f99c22", "#f4cc1f", "#a2c93a", "#4ab67c", "#4f97d8", "#7d6fc4", "#ba67b0", "#ec5047"].map((c, i) => <ellipse key={c} cx="12" cy="6.500" rx="3.600" ry="4.800" fill={c} opacity=".82" transform={`rotate(${i * 45} 12 12)`} />)}</g>],
  [false, <g><rect x="0" y="1.500" width="22" height="19" rx="4" fill="#1edb55" /><rect x="4" y="7" width="10" height="9" rx="2" fill="#fff" /><path d="M15 11l4-3v8z" fill="#fff" /><circle cx="18" cy="17" r="5.500" fill="#f4f4f4" /><path d="M15.500 14.500q1 4.500 5 5l-1.500-2h-1l-1-1v-1z" fill="#22c553" stroke="#22c553" /></g>],
  [true, <g><path d="M12 1c7 0 11.500 4.500 11.500 10S19 20 12 20q-2 0-3.500-.5L3 21.500 5 18Q.5 15 .5 11C.5 5.500 5 1 12 1z" fill="#1793fb" /><ellipse cx="16.500" cy="17" rx="7.500" ry="5.500" fill="#f7f8fa" /><path d="M12.500 17h1.800M15.700 17h1.800M18.900 17h1.800" stroke="#1a3f94" strokeWidth="1.800" /></g>],
  [false, <g><path d="M1 13h4.500v9H1z" fill="#ee3f52" /><path d="M6.500 8H11v14H6.500z" fill="#f59a20" /><path d="M12 5h4.500v17H12z" fill="#24c53d" /><path d="M17.500 1H22v21h-4.500z" fill="#27a2f0" /><path d="M0 21h24v2H0z" fill="#ecf1f4" /></g>],
  [false, <g><path d="M11 10h2v12h-2z" fill="#dfe5e8" /><path d="M2 0h20l2 10H0z" fill="#168fe4" /><rect x="4" y="1.500" width="16" height="5.500" fill="#fff" /><circle cx="9" cy="4.500" r="2" fill="#ef8d3a" /><path d="M13 4.500h5" stroke="#5bc37a" strokeWidth="1.500" /><ellipse cx="12" cy="22.300" rx="6" ry="1.500" fill="#dfe5e8" /></g>],
  [true, <g><circle cx="12" cy="12" r="11" fill="#fafafc" stroke="#c463ea" strokeWidth="1.600" /><path d="M9 17V7l8-2v10" fill="none" stroke="#ef4791" strokeWidth="2" /><circle cx="7.500" cy="17" r="2.300" fill="#a450ec" /><circle cx="15.500" cy="15" r="2.300" fill="#2a9ff0" /></g>],
  [false, <g><circle cx="12" cy="12" r="11.500" fill="#fb8315" stroke="#eee" /><path d="M11.500 8Q8 5.500 4.500 7v9.500q3.500-1.500 7 1zM12.500 8Q16 5.500 19.500 7v9.500q-3.500-1.500-7 1z" fill="#fff" /></g>],
  [true, <g><rect x="0" y="1" width="24" height="22.500" rx="2" fill="#b4c0c4" /><circle cx="12" cy="12" r="8.500" fill="#8f9699" stroke="#2b2f31" strokeWidth="2.500" /><circle cx="12" cy="12" r="2.500" fill="#2b2f31" /><path d="M12 12V4M12 12l7 4M12 12l-7 4" stroke="#2b2f31" strokeWidth="1.800" /></g>],
  [false, <g><rect width="24" height="24" rx="1.500" fill="#494949" /><path d="M5 8l13-4.500v4L9.500 10.500 18 13v4.500L5 21.500v-4l8.500-2.800L5 12z" fill="#fb9513" /></g>],
  [true, <g><circle cx="12" cy="12" r="11.500" fill="#fdc913" /><path d="M12 12L1.500 7A11.500 11.500 0 0 1 23 8z" fill="#e33b2e" /><path d="M12 12L2 6.500a11.500 11.500 0 0 0 9 17z" fill="#2ca24c" /><circle cx="12" cy="12" r="5.300" fill="#fff" /><circle cx="12" cy="12" r="4.200" fill="#4285f4" /><circle cx="19.500" cy="19" r="4.500" fill="#dfe9f8" stroke="#6fa0e0" strokeWidth=".7" /><path d="M19.800 21.500v-5l-1.500 1" fill="none" stroke="#2a6bd0" strokeWidth="1.300" /></g>],
  [true, <g><rect x=".8" y=".8" width="22.400" height="22.400" fill="#1f0f0f" stroke="#dc0a12" strokeWidth="1.600" /><path d="M5.500 18.500q-1-1 3-3 3.500-4 3-9 1-2 1.200 1 0 5 6 7.500 2 2-1 1.500-5-1.200-9.500.5-2 2-2.700 1.500z" fill="none" stroke="#ddd" strokeWidth="1.100" /></g>],
  [true, <g><rect x="11" y="3" width="13" height="18" fill="#f5f7fa" /><path d="M15 6h8M15 9h8M15 12h8M15 15h8M15 18h8" stroke="#2b5699" strokeWidth="1.200" /><path d="M0 3l14-3v24L0 21z" fill="#2b5bab" /><text x="7" y="16" fontSize="11" fontWeight="700" textAnchor="middle" fill="#fff">W</text></g>],
  [true, <g><rect x="-1" y="-.5" width="26" height="25" rx="4.500" fill="#157bd0" /><rect x="2.500" y="3.500" width="19" height="16.500" rx="2" fill="#fff" /><path d="M10.500 7.500H7v8.500h3.500M13.500 7.500H17v8.500h-3.500" fill="none" stroke="#2a3136" strokeWidth="3" /></g>],
  [true, <g><circle cx="12" cy="14" r="10" fill="#fafafa" /><path d="M10 0h4v4h3.500L12 9 6.500 4H10z" fill="#27bd49" /><path d="M7.500 12.500l5.500-3 4 1.200v10l-4 1.200-5.500-2 5.500.3V12l-3.200 1V18l-2.300.8z" fill="#e52817" /></g>],
  [true, <Adobe t="Id" c="#f10f8c" b="#3a0c26" />],
  [true, <Adobe t="Ps" c="#0dc5f5" b="#03202c" />],
  [true, <Adobe t="Br" c="#e4ac06" b="#2b2204" />],
  [true, <Adobe t="Ai" c="#f7720c" b="#2d1303" />],
];

function Dock() {
  return (
    <footer className="mx-auto flex h-[39px] w-[860px] rounded-t-[5px] bg-linear-to-r from-[#5b8389] via-[#83aeb3] to-[#62898e] pl-[3px]">
      {dock.map(([on, art], i) => (
        <div key={i} className="flex w-[30px] flex-col items-center pt-[6px]">
          <svg viewBox="0 0 24 24" className="size-6 overflow-visible" fontFamily="Open Sans">{art}</svg>
          {on && <i className="mt-[4px] size-[3px] rounded-full bg-[#0e1d1f]" />}
        </div>
      ))}
      <i className="mt-[4px] ml-[7px] h-[29px] w-px bg-[#3c5b5f]" />
      <svg viewBox="0 0 22 26" className="mt-[4px] ml-[10px] h-[26px] w-[22px]">
        <path d="M1 4h20l-3 20q-7 3-14 0z" fill="#dfe2e3" /><path d="M6 7l2 16M11 7v17M16 7l-2 16" stroke="#cdd1d3" />
        <ellipse cx="11" cy="4" rx="10" ry="3" fill="#eef0f0" /><path d="M4 3l4 2M9 1l3 3M13 5l4-3M7 2h3" stroke="#4a5560" strokeWidth="1.300" /><path d="M11 5l2-1" stroke="#c33" strokeWidth="1.300" />
      </svg>
    </footer>
  );
}

export default function App() {
  return (
    <div className={`flex h-[900px] w-[1440px] flex-col overflow-hidden bg-[radial-gradient(ellipse_at_93%_100%,#5f878b_0,#30575d_14%,#234850_30%,#3c6369_60%,#4d757b_100%)] ${UI}`}>
      <MenuBar />
      <div className="flex h-[838px] shrink-0">
        <div className="h-[838px] w-[1421px] shrink-0 overflow-hidden rounded-t-[5px] rounded-b-[5px] bg-white shadow-[0_6px_18px_rgba(0,0,0,0.45)]">
          <TabStrip />
          <Toolbar />
          <div className={ARIAL}>
            <SiteHeader />
            <div className="flex">
              <Sidebar />
              <Results />
            </div>
          </div>
        </div>
        <BackWindow />
      </div>
      <Dock />
    </div>
  );
}
